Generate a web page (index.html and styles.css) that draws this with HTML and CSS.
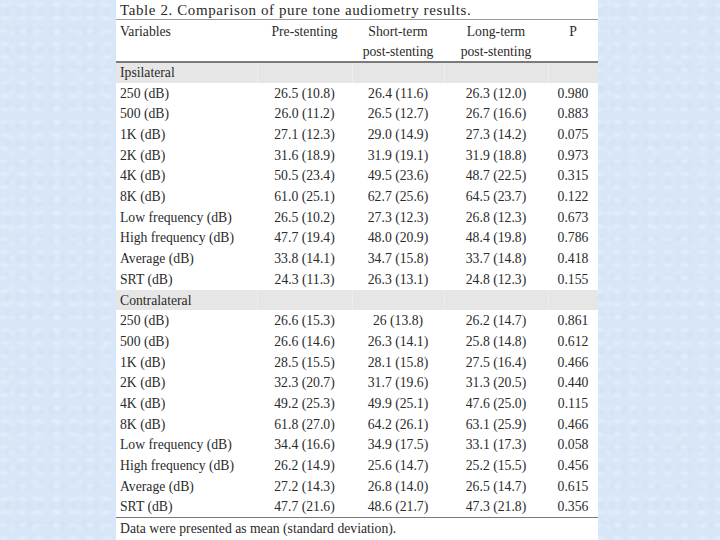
FILE: index.html
```html
<!DOCTYPE html>
<html>
<head>
<meta charset="utf-8">
<link rel="stylesheet" href="styles.css">
</head>
<body>
<div class="slide">
  <div class="panel">
    <table class="results">
      <colgroup>
        <col class="c-var"><col class="c-pre"><col class="c-short"><col class="c-long"><col class="c-p">
      </colgroup>
      <caption>Table 2. Comparison of pure tone audiometry results.</caption>
      <thead>
        <tr class="head1"><th class="lbl">Variables</th><th>Pre-stenting</th><th>Short-term</th><th>Long-term</th><th>P</th></tr>
        <tr class="head2"><th class="lbl"></th><th></th><th>post-stenting</th><th>post-stenting</th><th></th></tr>
      </thead>
      <tbody>
        <tr class="group"><td class="lbl">Ipsilateral</td><td></td><td></td><td></td><td></td></tr>
        <tr><td class="lbl">250 (dB)</td><td>26.5 (10.8)</td><td>26.4 (11.6)</td><td>26.3 (12.0)</td><td>0.980</td></tr>
        <tr><td class="lbl">500 (dB)</td><td>26.0 (11.2)</td><td>26.5 (12.7)</td><td>26.7 (16.6)</td><td>0.883</td></tr>
        <tr><td class="lbl">1K (dB)</td><td>27.1 (12.3)</td><td>29.0 (14.9)</td><td>27.3 (14.2)</td><td>0.075</td></tr>
        <tr><td class="lbl">2K (dB)</td><td>31.6 (18.9)</td><td>31.9 (19.1)</td><td>31.9 (18.8)</td><td>0.973</td></tr>
        <tr><td class="lbl">4K (dB)</td><td>50.5 (23.4)</td><td>49.5 (23.6)</td><td>48.7 (22.5)</td><td>0.315</td></tr>
        <tr><td class="lbl">8K (dB)</td><td>61.0 (25.1)</td><td>62.7 (25.6)</td><td>64.5 (23.7)</td><td>0.122</td></tr>
        <tr><td class="lbl">Low frequency (dB)</td><td>26.5 (10.2)</td><td>27.3 (12.3)</td><td>26.8 (12.3)</td><td>0.673</td></tr>
        <tr><td class="lbl">High frequency (dB)</td><td>47.7 (19.4)</td><td>48.0 (20.9)</td><td>48.4 (19.8)</td><td>0.786</td></tr>
        <tr><td class="lbl">Average (dB)</td><td>33.8 (14.1)</td><td>34.7 (15.8)</td><td>33.7 (14.8)</td><td>0.418</td></tr>
        <tr><td class="lbl">SRT (dB)</td><td>24.3 (11.3)</td><td>26.3 (13.1)</td><td>24.8 (12.3)</td><td>0.155</td></tr>
        <tr class="group"><td class="lbl">Contralateral</td><td></td><td></td><td></td><td></td></tr>
        <tr><td class="lbl">250 (dB)</td><td>26.6 (15.3)</td><td>26 (13.8)</td><td>26.2 (14.7)</td><td>0.861</td></tr>
        <tr><td class="lbl">500 (dB)</td><td>26.6 (14.6)</td><td>26.3 (14.1)</td><td>25.8 (14.8)</td><td>0.612</td></tr>
        <tr><td class="lbl">1K (dB)</td><td>28.5 (15.5)</td><td>28.1 (15.8)</td><td>27.5 (16.4)</td><td>0.466</td></tr>
        <tr><td class="lbl">2K (dB)</td><td>32.3 (20.7)</td><td>31.7 (19.6)</td><td>31.3 (20.5)</td><td>0.440</td></tr>
        <tr><td class="lbl">4K (dB)</td><td>49.2 (25.3)</td><td>49.9 (25.1)</td><td>47.6 (25.0)</td><td>0.115</td></tr>
        <tr><td class="lbl">8K (dB)</td><td>61.8 (27.0)</td><td>64.2 (26.1)</td><td>63.1 (25.9)</td><td>0.466</td></tr>
        <tr><td class="lbl">Low frequency (dB)</td><td>34.4 (16.6)</td><td>34.9 (17.5)</td><td>33.1 (17.3)</td><td>0.058</td></tr>
        <tr><td class="lbl">High frequency (dB)</td><td>26.2 (14.9)</td><td>25.6 (14.7)</td><td>25.2 (15.5)</td><td>0.456</td></tr>
        <tr><td class="lbl">Average (dB)</td><td>27.2 (14.3)</td><td>26.8 (14.0)</td><td>26.5 (14.7)</td><td>0.615</td></tr>
        <tr class="last"><td class="lbl">SRT (dB)</td><td>47.7 (21.6)</td><td>48.6 (21.7)</td><td>47.3 (21.8)</td><td>0.356</td></tr>
      </tbody>
      <tfoot>
        <tr><td class="lbl note" colspan="5">Data were presented as mean (standard deviation).</td></tr>
      </tfoot>
    </table>
  </div>
</div>
</body>
</html>
```

FILE: styles.css
```css
html, body {
  margin: 0;
  padding: 0;
}
body {
  width: 720px;
  height: 540px;
  overflow: hidden;
  background-color: #d8e7f7;
  background-image:
    radial-gradient(ellipse 6px 3px at 30% 40%, rgba(255,255,255,0.3), transparent),
    radial-gradient(ellipse 4px 7px at 70% 60%, rgba(196,216,240,0.3), transparent),
    radial-gradient(ellipse 5px 4px at 50% 20%, rgba(236,244,252,0.3), transparent);
  background-size: 17px 13px, 11px 19px, 23px 15px;
  font-family: "Liberation Serif", "Times New Roman", serif;
  color: #2a2a2a;
}
.slide {
  display: flex;
  height: 540px;
  padding-left: 116px;
}
.panel {
  width: 482px;
  height: 540px;
  background: #fff;
}
.results {
  width: 482px;
  border-collapse: collapse;
  table-layout: fixed;
  font-size: 13.7px;
  line-height: 1;
}
.c-var { width: 141px; }
.c-pre { width: 95px; }
.c-short { width: 92px; }
.c-long { width: 104px; }
.c-p { width: 50px; }
caption {
  text-align: left;
  height: 19px;
  line-height: 20px;
  padding-left: 4px;
  font-size: 15px;
  letter-spacing: 0.6px;
  border-bottom: 1px solid #9a9a9a;
  white-space: nowrap;
}
th, td {
  box-sizing: border-box;
}
th {
  font-weight: normal;
  text-align: center;
  height: 20px;
  padding: 3px 0 0;
  white-space: nowrap;
}
.head2 th {
  height: 22px;
  border-bottom: 2px solid #7a7a7a;
}
td {
  text-align: center;
  height: 20.7px;
  padding: 1px 0 0;
  white-space: nowrap;
}
.lbl {
  text-align: left;
  padding-left: 4px;
}
.group td {
  background: #e6e6e6;
  border-left: 1px solid #eeeeee;
}
.group td:first-child {
  border-left: none;
}
.last td {
  border-bottom: 1.5px solid #7a7a7a;
}
.note {
  height: 22px;
}
```
